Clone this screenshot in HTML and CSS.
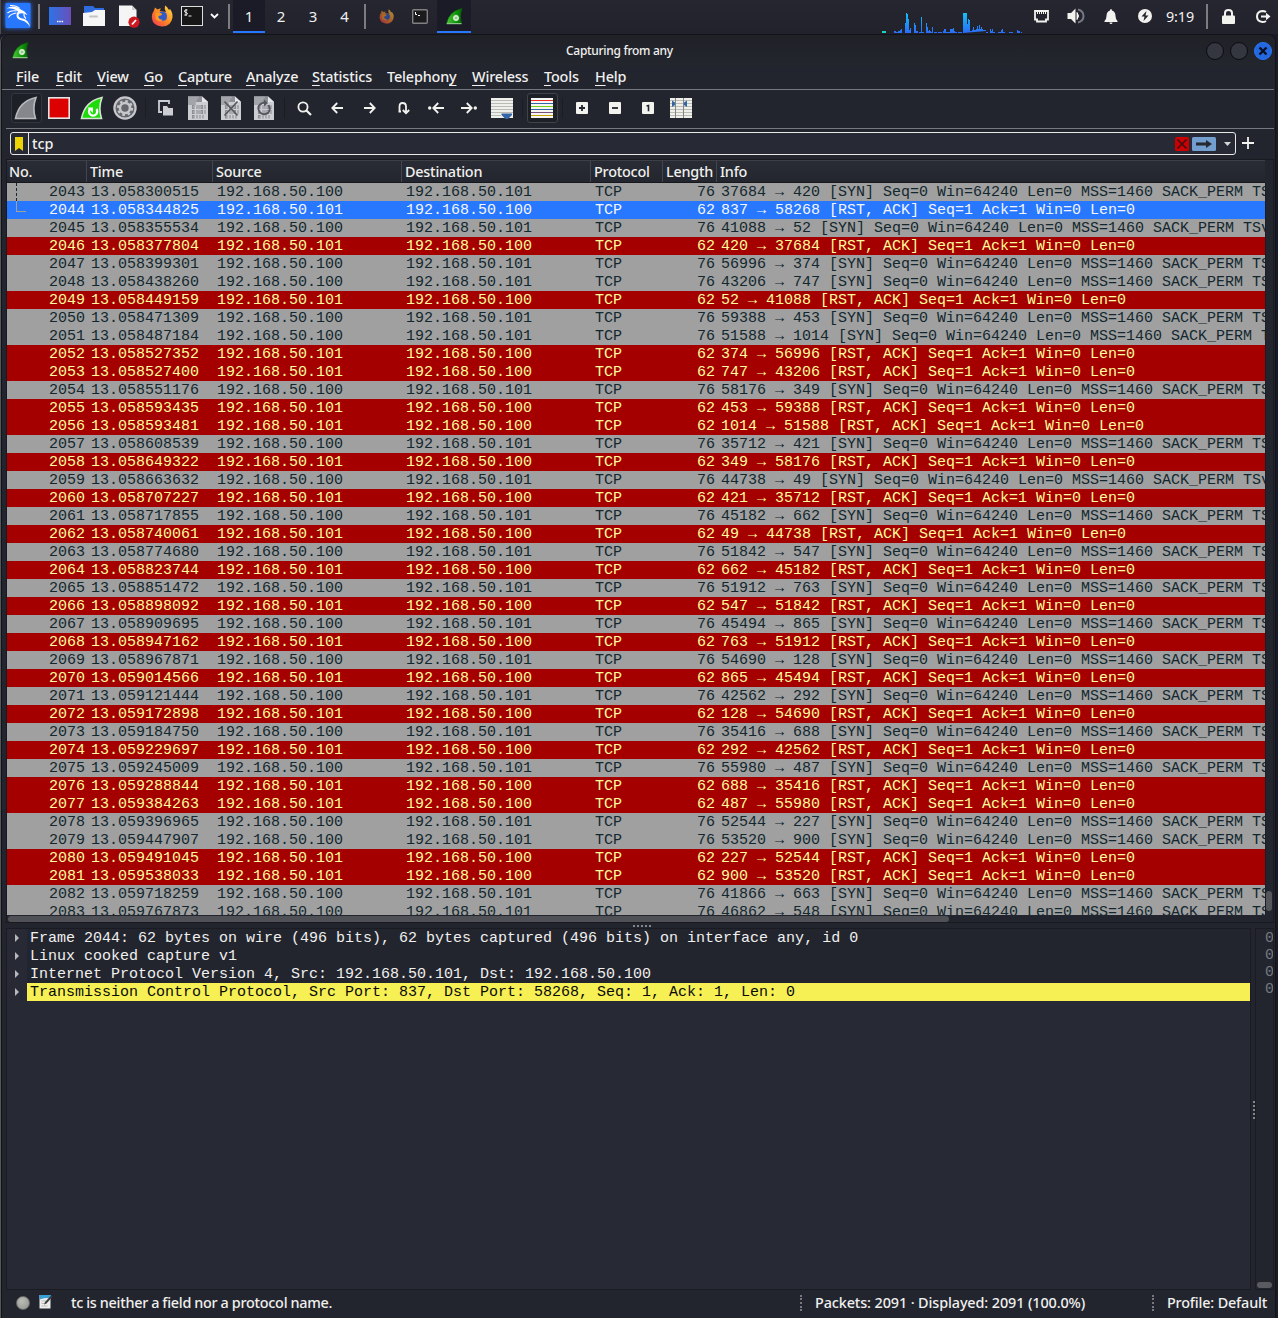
FILE: index.html
```html
<!DOCTYPE html>
<html lang="en">
<head>
<meta charset="utf-8">
<title>Capturing from any</title>
<link rel="stylesheet" href="styles.css">
</head>
<body>
<svg class="defs" width="0" height="0">
  <defs>
    <linearGradient id="fire" x1="0" y1="1" x2="1" y2="0"><stop offset="0" stop-color="#f0305c"/><stop offset=".5" stop-color="#ff8a22"/><stop offset="1" stop-color="#ffe14a"/></linearGradient>
    <linearGradient id="desk"><stop offset="0" stop-color="#2c74e8"/><stop offset="1" stop-color="#6a4fb8"/></linearGradient>
    <linearGradient id="green" x1="0" x2="1"><stop offset="0" stop-color="#4fc63a"/><stop offset=".6" stop-color="#12970c"/><stop offset="1" stop-color="#066a04"/></linearGradient>
    <linearGradient id="net" gradientUnits="userSpaceOnUse" x1="0" y1="0" x2="0" y2="21"><stop offset="0" stop-color="#12c4f4"/><stop offset="1" stop-color="#2a6cf8"/></linearGradient>
    <symbol id="firefox" viewBox="0 0 22 22"><path d="M3 5.500L4 2.500L6.500 4.500Q8 3.500 10 3.500L8.500 6L15 7Q13 4 14 .5Q16 1 18 5L19 4Q22 8 21.500 12.500Q20 21.500 11 21.500Q2 21 .8 13Q.3 9 3 5.500Z" fill="url(#fire)"/><path d="M8 8Q12 5 15.500 8.500Q17.500 15 12 16Q6.500 15.500 6.500 11Z" fill="#3358c8"/><path d="M4.500 8Q8 6.500 11.500 9Q10 11 7.500 11Q7 14.500 12 15Q8 18 4.500 14Z" fill="#ff9a20"/></symbol>
    <symbol id="shark" viewBox="0 0 17 17"><path d="M.5 15.500Q3 3.500 15.800 .5Q13.200 8 15.500 15.500Z" fill="url(#green)" stroke="#0a6a08" stroke-width=".6"/><path d="M.8 15.700H15.500" stroke="#a8dca0" stroke-width="1"/><circle cx="10" cy="10" r="2.900" fill="#d6eed0"/><circle cx="10" cy="10" r="1.300" fill="#4ba744"/><path d="M10 6.800V13.200M6.800 10H13.200" stroke="#d6eed0" stroke-width=".6"/></symbol>
    <symbol id="bits" viewBox="0 0 20 24"><path d="M0 .5H14L20 6V24H0Z" fill="#ccced3"/><path d="M0 .5H14L20 6H8Q8 2 12 .5H0Z" fill="#8d9096"/><path d="M0 .5H11Q7 4 8 9H0Z" fill="#a2a5aa"/><path d="M14 .5L20 6H14Z" fill="#e7e8ea"/><g fill="none" stroke="#8b8e94" stroke-width="1.100"><path d="M4.500 9.500h1.500v3h-1.500zM13 9.500h1.500v3h-1.500zM4.500 14.500h1.500v3h-1.500zM13 14.500h1.500v3h-1.500zM4.500 19.500h1.500v2.500h-1.500z"/><path d="M9 9v4M11 9v4M17 9v4M9 14v4M11 14v4M9 19v3.500M12 19v3.500M15 19v3.500M17 14v4"/></g></symbol>
  </defs>
</svg>

<header class="taskbar">
  <div class="cell w35"><svg class="kali" width="28" height="28" viewBox="0 0 28 28"><rect x="1.500" y="1" width="25" height="25" rx="1" fill="#2878ff"/><g fill="#fff"><path d="M2.500 6.500Q9 2.500 15 6.500L20.500 9.500L23.500 13L19.500 11.500Q14.500 10.500 14.500 13.500Q15 16 19 16.500Q24.500 17.500 26 25Q23 19.500 18 18.500Q12.500 17.500 12.500 13.500Q12.500 11 14 9.500Q9 5.500 2.500 6.500Z"/></g><path d="M6 3.500Q12 3 15.500 6.500M3.500 11Q7 8 12.500 9M4.500 15.500Q7 11.500 12.500 11M20 11.500Q19.500 14.500 22 16.500" fill="none" stroke="#fff" stroke-width="1.100"/></svg></div>
  <div class="cell w8"><i class="bar"></i></div>
  <div class="cell w34"><svg width="22" height="18" viewBox="0 0 22 18"><rect width="22" height="18" fill="url(#desk)"/><path d="M8 14.500h1.500M10.300 14.500h1.500M12.600 14.500h1.500" stroke="#fff" stroke-width="1.600"/></svg></div>
  <div class="cell w34"><svg width="22" height="20" viewBox="0 0 22 20"><path d="M1 0H10L12 2H21V8H1Z" fill="#2f6ce0"/><path d="M0 7L9 6L12 4H22V20H0Z" fill="#f6f6f6"/><path d="M7 10.500h7" stroke="#c4c4c4" stroke-width="2" stroke-linecap="round"/></svg></div>
  <div class="cell w34"><svg class="doc" width="21" height="23" viewBox="0 0 21 23"><path d="M0 .5H13L17.500 5V21H0Z" fill="#f5f5f5"/><path d="M13 .5L17.500 5H13Z" fill="#ccc"/><circle cx="15" cy="17.200" r="5.600" fill="#cf1720"/><path d="M13 19.500L17 15" stroke="#fff" stroke-width="1.800"/></svg></div>
  <div class="cell w34"><svg width="22" height="22"><use href="#firefox"/></svg></div>
  <div class="cell w27"><svg class="term" width="22" height="20" viewBox="0 0 22 20"><rect x=".5" y=".5" width="21" height="19" fill="#171717" stroke="#ddd"/><path d="M6.500 4Q3.500 3.500 3.500 5Q3.500 6.500 5 6.500Q6.500 7 6.500 8Q6.300 9.200 3.300 9M5 3v7M7.500 10h3" fill="none" stroke="#fff" stroke-width=".9"/></svg></div>
  <div class="cell w18"><svg class="term" width="9" height="6" viewBox="0 0 9 6"><path d="M1 1L4.500 4.500L8 1" fill="none" stroke="#fff" stroke-width="1.800"/></svg></div>
  <div class="cell w9"><i class="bar"></i></div>
  <div class="cell w32 active">1</div>
  <div class="cell w32">2</div>
  <div class="cell w32">3</div>
  <div class="cell w31">4</div>
  <div class="cell w10"><i class="bar"></i></div>
  <div class="cell w33"><svg class="faded" width="15" height="15"><use href="#firefox"/></svg></div>
  <div class="cell w34"><svg width="16" height="15" viewBox="0 0 16 15"><rect x=".7" y=".7" width="14.600" height="13.600" rx="1" fill="#1a1b1d" stroke="#808080" stroke-width="1.400"/><path d="M3.500 3v2.500H5M6 6.500h2" stroke="#fff" fill="none"/></svg></div>
  <div class="cell w34 active"><svg width="17" height="17"><use href="#shark"/></svg></div>
  <svg class="graph" width="142" height="22" viewBox="0 0 142 22"><path d="M0 19h4v2h-4z" fill="#1fd0bd"/><path fill="url(#net)" d="M12 19h2v1h2v-1h2v-1h1v-1h1v4h-8zM23 21v-10h1v-10h1v1h1v5h1v11h1v-2h1v5zM32 21v-10h1v2h1v6h2v2zM37 21v-1h2v-15h1v15h2v1zM44 21v-10h1v4h1v4h1v-1h1v1h1v1h1v-5h1v6zM52 20h3v1h-3zM56 20h4v1h-4zM61 21v-2h1v-2h2v3h4v-3h3v-1h1v3h1v1h2v1zM76 20h4v1h-4zM81 21v-20h4v11h1v-5h1v1h1v11h2v-1h1v-3h1v3h2v-1h1v-3h1v3h1v-4h1v4h1v-2h1v2h1v1h3v1zM104 20h2v1h-2zM108 21v-4h1v2h1v-2h1v3h2v1zM116 20h3v-2h1v-1h1v3h2v1h-7zM127 20h4v1h-4zM135 21v-3h1v1h2v2zM139 20h1v1h-1z"/></svg>
  <div class="cell w34"><svg width="15" height="13" viewBox="0 0 15 13"><path d="M1 1H14V9.500H12V11.500H3V9.500H1Z" fill="none" stroke="#f2f2ee" stroke-width="1.800"/><path d="M3.500 1v3M5.500 1v3M7.500 1v3M9.500 1v3M11.500 1v3" stroke="#f2f2ee"/></svg></div>
  <div class="cell w35"><svg width="18" height="16" viewBox="0 0 18 16"><path d="M.5 5H4L8.500 .5V15.500L4 11H.5Z" fill="#f2f2ee"/><path d="M10 4.500Q13 8 10 11.500Z" fill="#f2f2ee" stroke="#f2f2ee"/><path d="M11 1.500Q16.500 3 16.500 8Q16.500 13 11 14.500" fill="none" stroke="#777982" stroke-width="2"/></svg></div>
  <div class="cell w35"><svg width="14" height="15" viewBox="0 0 14 15"><path d="M7 0Q8 0 8 1.500Q11.500 2.500 11.500 7Q11.500 10 13.500 12V13H.5V12Q2.500 10 2.500 7Q2.500 2.500 6 1.500Q6 0 7 0ZM5.500 13.500H8.500Q8.500 15 7 15Q5.500 15 5.500 13.500" fill="#f2f2ee"/></svg></div>
  <div class="cell w33"><svg width="14" height="14" viewBox="0 0 14 14"><circle cx="7" cy="7" r="7" fill="#f2f2ee"/><path d="M8.500 2L3.500 7.500H6.500L5.500 12L10.500 6.500H7.500Z" fill="#23242f"/></svg></div>
  <div class="cell w38 clock">9:19</div>
  <div class="cell w15"><i class="bar"></i></div>
  <div class="cell w28"><svg width="13" height="15" viewBox="0 0 13 15"><path d="M3 7V4Q3 1 6.500 1Q10 1 10 4V7" fill="none" stroke="#f2f2ee" stroke-width="2"/><rect y="6.500" width="13" height="8.500" rx="1" fill="#f2f2ee"/></svg></div>
  <div class="cell w42"><svg width="15" height="13" viewBox="0 0 15 13"><path d="M10 2Q8.500 1 6.500 1Q1 1.500 1 6.500Q1 11.500 6.500 12Q8.500 12 10 11" fill="none" stroke="#f2f2ee" stroke-width="2"/><path d="M5 5.500H10V2.800L14.500 6.500L10 10.200V7.500H5Z" fill="#f2f2ee"/></svg></div>
</header>

<main class="window">
  <div class="titlebar">
    <svg width="17" height="17"><use href="#shark"/></svg>
    <h1>Capturing from any</h1>
    <div class="buttons"><b></b><b></b><b class="close"><svg width="10" height="10" viewBox="0 0 10 10"><path d="M1.500 1.500L8.500 8.500M8.500 1.500L1.500 8.500" stroke="#0b1020" stroke-width="2.400"/></svg></b></div>
  </div>
  <nav class="menu">
    <span><u>F</u>ile</span><span><u>E</u>dit</span><span><u>V</u>iew</span><span><u>G</u>o</span><span><u>C</u>apture</span><span><u>A</u>nalyze</span><span><u>S</u>tatistics</span><span>Telephon<u>y</u></span><span><u>W</u>ireless</span><span><u>T</u>ools</span><span><u>H</u>elp</span>
  </nav>
  <div class="toolbar">
    <div class="tool pressed dark"><svg width="24" height="24" viewBox="0 0 24 24"><path d="M1.500 22.500Q5 5 22 1.500Q18 12 21.500 22.500Z" fill="#85878d" stroke="#b8babf" stroke-width="1.600"/></svg></div>
    <div class="tool"><svg width="22" height="22" viewBox="0 0 22 22"><rect x=".8" y=".8" width="20.400" height="20.400" fill="#dd0000" stroke="#e4e4e4" stroke-width="1.600"/></svg></div>
    <div class="tool"><svg width="24" height="24" viewBox="0 0 24 24"><path d="M1.500 22.500Q5 5 22 1.500Q18 12 21.500 22.500Z" fill="#1edc0a" stroke="#d5e6d0" stroke-width="1.600"/><path d="M9.800 12.500Q7.800 17 11 19Q14 20.500 16.500 18Q18 15 16.500 13" fill="none" stroke="#fff" stroke-width="2.200"/><path d="M7.500 11.500H13V17Z" fill="#fff"/></svg></div>
    <div class="tool"><svg width="24" height="24" viewBox="0 0 24 24"><circle cx="12" cy="12" r="10.600" fill="#63666c" stroke="#c5c7ca" stroke-width="2.200"/><circle cx="12" cy="12" r="5" fill="none" stroke="#c5c7ca" stroke-width="2.600"/><circle cx="12" cy="12" r="7" fill="none" stroke="#c5c7ca" stroke-width="2.200" stroke-dasharray="2.700 2.800"/></svg></div>
    <i class="split"></i>
    <div class="tool"><svg width="15" height="16" viewBox="0 0 15 16"><path d="M4 12H1V1H11V4" fill="none" stroke="#ccced3" stroke-width="1.800"/><path d="M5 6H9L10.500 8H15V15.500H5Z" fill="#ccced3"/></svg></div>
    <div class="tool"><svg width="20" height="24"><use href="#bits"/></svg></div>
    <div class="tool"><svg width="20" height="24" viewBox="0 0 20 24"><use href="#bits"/><path d="M3.500 5.500L16.500 19.500M16.500 5.500L3.500 19.500" stroke="#55585e" stroke-width="1.700"/></svg></div>
    <div class="tool"><svg width="20" height="24" viewBox="0 0 20 24"><use href="#bits"/><path d="M14.500 9Q17 13 14.500 16.500Q10.500 20 6 16.500Q2.500 12 6 8.500Q8 6.500 11 6.800" fill="none" stroke="#55585e" stroke-width="1.800"/><path d="M10 3.500L14 7L10 10.500Z" fill="#55585e"/></svg></div>
    <i class="split"></i>
    <div class="tool"><svg width="15" height="15" viewBox="0 0 15 15"><circle cx="6" cy="6" r="4.600" fill="none" stroke="#f2f2ee" stroke-width="1.800"/><path d="M9.500 9.500L14 14" stroke="#f2f2ee" stroke-width="2.200"/></svg></div>
    <div class="tool"><svg width="12" height="12" viewBox="0 0 12 12"><path d="M12 6H1.500M6.200 1L1.300 6L6.200 11" fill="none" stroke="#f2f2ee" stroke-width="1.800"/></svg></div>
    <div class="tool"><svg width="12" height="12" viewBox="0 0 12 12"><path d="M0 6H10.500M5.800 1L10.700 6L5.800 11" fill="none" stroke="#f2f2ee" stroke-width="1.800"/></svg></div>
    <div class="tool"><svg width="13" height="14" viewBox="0 0 13 14"><path d="M1.500 10.500H4M2.500 10V5.500Q2.500 2 5.500 2Q9 2 9 5.500V11M5.800 9L9 12.200L12.200 9" fill="none" stroke="#f2f2ee" stroke-width="1.800"/></svg></div>
    <div class="tool"><svg width="16" height="12" viewBox="0 0 16 12"><circle cx="1.700" cy="6" r="1.700" fill="#f2f2ee"/><path d="M16 6H6M10.200 1L5.300 6L10.200 11" fill="none" stroke="#f2f2ee" stroke-width="1.800"/></svg></div>
    <div class="tool"><svg width="16" height="12" viewBox="0 0 16 12"><circle cx="14.300" cy="6" r="1.700" fill="#f2f2ee"/><path d="M0 6H10M5.800 1L10.700 6L5.800 11" fill="none" stroke="#f2f2ee" stroke-width="1.800"/></svg></div>
    <div class="tool"><svg width="22" height="22" viewBox="0 0 22 22"><path fill="#efefeb" d="M0 1h22v20H0z"/><path d="M0 3.500h22M0 6.500h22M0 9.500h22M0 12.500h22M0 15.500h22M0 18.500h10" stroke="#b9bbb4"/><path d="M10.500 16.500H21V18L17 22H14.500L10.500 18Z" fill="#3465a4"/></svg></div>
    <i class="split"></i>
    <div class="tool pressed"><svg width="22" height="22" viewBox="0 0 22 22"><path fill="#f5f5f2" d="M0 1h22v20H0z"/><path d="M0 3.500h22" stroke="#ef2929"/><path d="M0 6.500h22" stroke="#3465a4"/><path d="M0 9.500h22" stroke="#73d216"/><path d="M0 12.500h22" stroke="#3465a4"/><path d="M0 15.500h22" stroke="#75507b"/><path d="M0 18.500h22" stroke="#c4a000"/></svg></div>
    <i class="split"></i>
    <div class="tool"><svg width="12" height="12" viewBox="0 0 12 12"><rect width="12" height="12" rx="1" fill="#f2f2ee"/><path d="M6 3v6M3 6h6" stroke="#23252e" stroke-width="1.800"/></svg></div>
    <div class="tool"><svg width="12" height="12" viewBox="0 0 12 12"><rect width="12" height="12" rx="1" fill="#f2f2ee"/><path d="M3 6h6" stroke="#23252e" stroke-width="1.800"/></svg></div>
    <div class="tool"><svg width="12" height="12" viewBox="0 0 12 12"><rect width="12" height="12" rx="1" fill="#f2f2ee"/><path d="M4.500 4L6.500 3.500V9.300" fill="none" stroke="#23252e" stroke-width="1.600"/></svg></div>
    <div class="tool"><svg width="22" height="22" viewBox="0 0 22 22"><path fill="#efefeb" d="M0 1h22v20H0z"/><path d="M0 3.500h22M0 6.500h22M0 9.500h22M0 12.500h22M0 15.500h22M0 18.500h22" stroke="#b9bbb4"/><path d="M5.500 1v20M13.500 1v20" stroke="#85877f"/><path d="M2 3.500L5 5.500V8L2 10ZM17 3.500L14 5.500V8L17 10Z" fill="#3465a4"/></svg></div>
  </div>
  <div class="filter">
    <div class="field">
      <span class="mark"><svg width="8" height="14" viewBox="0 0 8 14"><path d="M0 0H8V14L4 11L0 14Z" fill="#edd400"/></svg></span>
      <span class="query">tcp</span>
      <svg width="14" height="14" viewBox="0 0 14 14"><rect width="14" height="14" rx="1.500" fill="#cc0000"/><path d="M2.500 2.500L11.500 11.500M11.500 2.500L2.500 11.500" stroke="#3a1015" stroke-width="1.500"/></svg>
      <svg class="apply" width="24" height="14" viewBox="0 0 24 14"><rect width="24" height="14" rx="1.500" fill="#729fcf"/><path d="M4 5.500H14V3L20 7L14 11V8.500H4Z" fill="#25292f"/></svg>
      <svg class="drop" width="7" height="4" viewBox="0 0 7 4"><path d="M0 0H7L3.500 4Z" fill="#d6d6d2"/></svg>
    </div>
    <svg class="plus" width="12" height="12" viewBox="0 0 12 12"><path d="M6 0v12M0 6h12" stroke="#f2f2ee" stroke-width="1.800"/></svg>
  </div>
  <section class="packets">
    <div class="head"><span>No.</span><span>Time</span><span>Source</span><span>Destination</span><span>Protocol</span><span>Length</span><span>Info</span></div>
    <div class="scroller">
      <div class="rows" id="rows"></div>
      <div class="vtrack"><i class="vthumb"></i></div>
    </div>
    <div class="htrack"><i class="hthumb"></i></div>
  </section>
  <div class="grip"></div>
  <section class="lower">
    <div class="detail">
      <p><svg class="tri" width="4" height="8" viewBox="0 0 4 8"><path d="M0 0L4 4L0 8Z"/></svg><span>Frame 2044: 62 bytes on wire (496 bits), 62 bytes captured (496 bits) on interface any, id 0</span></p>
      <p><svg class="tri" width="4" height="8" viewBox="0 0 4 8"><path d="M0 0L4 4L0 8Z"/></svg><span>Linux cooked capture v1</span></p>
      <p><svg class="tri" width="4" height="8" viewBox="0 0 4 8"><path d="M0 0L4 4L0 8Z"/></svg><span>Internet Protocol Version 4, Src: 192.168.50.101, Dst: 192.168.50.100</span></p>
      <p><svg class="tri" width="4" height="8" viewBox="0 0 4 8"><path d="M0 0L4 4L0 8Z"/></svg><span class="hit">Transmission Control Protocol, Src Port: 837, Dst Port: 58268, Seq: 1, Ack: 1, Len: 0</span></p>
    </div>
    <div class="vgrip"></div>
    <div class="hex"><p>0</p><p>0</p><p>0</p><p>0</p><i class="hexthumb"></i></div>
  </section>
  <footer class="status">
    <i class="led"></i>
    <svg class="note" width="14" height="15" viewBox="0 0 14 15"><path d="M.5 1H11.500V14.500H.5Z" fill="#eeeeec"/><path d="M.5 1H11.500V4.500Q6 3 .5 5.500Z" fill="#38a0d4"/><path d="M2.500 7h5M2.500 9.500h3M2.500 12h6" stroke="#babdb6"/><path d="M5 10.500L6 8L12 1.500L13.500 2.800L7.500 9.500Z" fill="#3c3f42"/></svg>
    <span class="msg">tc is neither a field nor a protocol name.</span>
    <i class="dots"></i>
    <span class="count">Packets: 2091 · Displayed: 2091 (100.0%)</span>
    <i class="dots"></i>
    <span class="profile">Profile: Default</span>
  </footer>
</main>
<script src="packets.js"></script>
</body>
</html>
```
FILE: styles.css
```css
* { box-sizing: border-box; }
body {
  margin: 0; width: 1278px; height: 1318px; overflow: hidden;
  background: #1a1b28; color: #f0f0ee;
  font: 500 14.4px "Noto Sans", sans-serif;
  display: flex; flex-direction: column;
}
svg { display: block; flex: none; }
i, b { display: block; flex: none; }
.defs { position: absolute; }

/* desktop panel */
.taskbar { height: 34px; flex: none; display: flex; background: linear-gradient(#262631, #22222d); border-left: 1px solid #4c4d50; margin-bottom: 1px; font-weight: 400; font-size: 15px; }
.taskbar .cell:first-child { margin-left: -1px; }
.cell { height: 33px; flex: none; display: flex; align-items: center; justify-content: center; padding-bottom: 1px; }
.active { background: #1a1b26; border-bottom: 2px solid #2777ff; padding: 1px 0 0; }
.bar { width: 2px; height: 25px; background: #7d7d80; }
.w8 { width: 8px; } .w9 { width: 9px; } .w10 { width: 10px; } .w15 { width: 15px; } .w18 { width: 18px; }
.w27 { width: 27px; } .w28 { width: 28px; } .w31 { width: 31px; } .w32 { width: 32px; } .w33 { width: 33px; }
.w34 { width: 34px; } .w35 { width: 35px; } .w38 { width: 38px; }
.w42 { width: 42px; }
.kali { filter: drop-shadow(0 0 2px #2878ff); }
.doc { margin-left: 2px; }
.term { margin-right: 2px; }
.faded { opacity: .6; }
.graph { margin: 12px 0 0 411px; }
.clock { font-size: 14.4px; letter-spacing: -.1px; }

/* capture window */
.window { flex: 1; margin-left: 2px; width: 1273px; display: flex; flex-direction: column; background: #23252e; border-radius: 7px 7px 0 0; box-shadow: 0 0 0 1px #121319, -2px 0 0 #55565a; }
.titlebar { height: 31px; flex: none; display: grid; grid-template-columns: 1fr auto 1fr; align-items: center; padding: 0 3px 0 10px; background: linear-gradient(#1f2127, #24262e); border-radius: 7px 7px 0 0; }
h1 { margin: 0 45px 0 0; font: 500 12px "Noto Sans", sans-serif; letter-spacing: -.3px; position: relative; left: 0; }
.buttons { display: flex; gap: 6px; justify-content: flex-end; }
.titlebar { grid-template-columns: 554px 1fr auto; }
.buttons b { width: 18px; height: 18px; border-radius: 50%; background: #343640; border: 1px solid #0b0c10; display: flex; align-items: center; justify-content: center; }
.buttons .close { background: #2468e0; border-color: #2777ff; }
.menu { height: 24px; flex: none; display: grid; grid-template-columns: 40px 41px 47px 34px 68px 66px 75px 85px 72px 51px 60px; padding-left: 14px; line-height: 22px; letter-spacing: -.15px; border-bottom: 1px solid #777980; margin: 0 1px 0 0; }
.menu u { text-underline-offset: 3px; text-decoration-thickness: 1px; text-decoration-skip-ink: none; }
.toolbar { height: 39px; flex: none; display: flex; align-items: center; padding: 0 0 2px 3.500px; margin: 0 1px 0 4px; border-bottom: 1px solid #777980; }
.tool { width: 33px; height: 30px; display: flex; align-items: center; justify-content: center; }
.tool.pressed { width: 31px; margin: 0 1px; background: #1e2027; border: 1px solid #41434a; border-radius: 3px; }
.tool.dark { border-color: #34363d; }
.split { width: 7px; height: 20px; background: linear-gradient(#1b1d24, #1b1d24) 3px 0 / 1px 100% no-repeat; }
.filter { height: 30px; flex: none; padding: 3px 0 0 8px; display: flex; align-items: flex-start; }
.field { width: 1226px; height: 23px; border: 1px solid #e8e8e4; border-radius: 3px; background: #272935; display: flex; align-items: center; }
.mark { width: 18px; height: 21px; border-right: 1px solid #e8e8e4; display: flex; align-items: center; justify-content: center; padding-right: 1px; }
.query { flex: 1; padding: 0 0 1px 3px; letter-spacing: -.1px; }
.apply { margin-left: 3px; }
.drop { margin: 0 4px 0 8px; }
.plus { margin: 5px 0 0 6px; }

/* packet list */
.packets { flex: none; height: 764px; margin: 0 1px 0 4px; border: 1px solid #191a20; display: flex; flex-direction: column; }
.head, .row { display: grid; grid-template-columns: 80px 126px 189px 189px 72px 54px 1fr; }
.head { width: 1258px; height: 23px; flex: none; background: linear-gradient(#292c34, #23262e); border-top: 1px solid #3c3f46; border-bottom: 1px solid #17181e; line-height: 21px; letter-spacing: -.22px; }
.head span { border-right: 1px solid #43464d; padding-left: 3px; }
.head span:first-child { padding-left: 2px; }
.head span:last-child { border: 0; }
.scroller { display: flex; height: 732px; flex: none; }
.rows { width: 1258px; overflow: hidden; }
.row, .detail, .hex { font: 400 15px/18px "Liberation Mono", monospace; }
.row { height: 18px; background: #a0a0a0; color: #12272e; white-space: pre; line-height: 19px; }
.row span { height: 18px; padding-left: 4px; overflow: hidden; position: relative; }
.row span:nth-child(1), .row span:nth-child(6) { text-align: right; padding: 0 2px 0 0; }
.rst { background: #a40000; color: #fffc9c; }
.selected { background: #2777ff; color: #f4f6ff; }
.first span:first-child::before { content: ""; position: absolute; left: 9px; top: 0; height: 18px; border-left: 1px dashed #12272e; }
.selected span:first-child::before { content: ""; position: absolute; left: 9px; top: 0; width: 9px; height: 10px; border: solid #a0a0a0; border-width: 0 0 1px 1px; }
.vtrack { width: 8px; border-left: 1px solid #1c1d24; }
.vthumb { width: 6px; height: 20px; margin: 708px 0 0; border-radius: 3px; background: #55565b; }
.htrack { height: 8px; padding: 1px; }
.hthumb { width: 941px; height: 6px; border-radius: 3px; background: #505156; }
.grip { height: 4px; flex: none; width: 18px; margin: 0 0 1px 631px; border-bottom: 2px dotted #85868a; }

/* packet details and bytes */
.lower { height: 362px; flex: none; display: flex; margin: 0 1px 0 4px; }
.detail { width: 1245px; border: 1px solid #1b1c23; background: #272935; }
p { margin: 0; white-space: pre; }
.detail p { height: 18px; display: flex; align-items: center; padding-left: 8px; line-height: 20px; }
.tri { fill: #b7b8ba; margin-right: 8px; }
.detail span { flex: 1; height: 18px; padding-left: 3px; background: #23252e; }
.detail .hit { background: #f6f055; color: #0a0a0a; }
.vgrip { width: 4px; height: 18px; margin: 173px -2px 0 2px; border-left: 2px dotted #85868a; }
.hex { width: 19px; overflow: hidden; position: relative; border: 1px solid #1b1c23; line-height: 17px; color: #77797e; padding: 1px 0 0 9px; }
.hexthumb { position: absolute; left: 1px; bottom: 1px; width: 15px; height: 6px; border-radius: 3px; background: #5a5b60; }

/* status bar */
.status { height: 28px; flex: none; display: flex; align-items: center; padding: 0 0 3px 14px; }
.led { width: 14px; height: 14px; border-radius: 50%; background: radial-gradient(circle at 40% 35%, #babdb6, #90938d); border: 1px solid #686a68; }
.note { margin: -2px 18px 0 9px; }
.msg { width: 729px; letter-spacing: -.25px; word-spacing: -.35px; }
.dots { width: 2px; height: 16px; border-left: 2px dotted #77797e; }
.count { margin-left: 13px; width: 337px; letter-spacing: -.11px; }
.profile { margin-left: 13px; white-space: nowrap; letter-spacing: -.17px; }
```
FILE: packets.js
```js
// number, fraction of second 13, kind (S = SYN, R = RST/ACK), source port, destination port
const packets = `2043 058300515 S 37684 420
2044 058344825 R 837 58268
2045 058355534 S 41088 52
2046 058377804 R 420 37684
2047 058399301 S 56996 374
2048 058438260 S 43206 747
2049 058449159 R 52 41088
2050 058471309 S 59388 453
2051 058487184 S 51588 1014
2052 058527352 R 374 56996
2053 058527400 R 747 43206
2054 058551176 S 58176 349
2055 058593435 R 453 59388
2056 058593481 R 1014 51588
2057 058608539 S 35712 421
2058 058649322 R 349 58176
2059 058663632 S 44738 49
2060 058707227 R 421 35712
2061 058717855 S 45182 662
2062 058740061 R 49 44738
2063 058774680 S 51842 547
2064 058823744 R 662 45182
2065 058851472 S 51912 763
2066 058898092 R 547 51842
2067 058909695 S 45494 865
2068 058947162 R 763 51912
2069 058967871 S 54690 128
2070 059014566 R 865 45494
2071 059121444 S 42562 292
2072 059172898 R 128 54690
2073 059184750 S 35416 688
2074 059229697 R 292 42562
2075 059245009 S 55980 487
2076 059288844 R 688 35416
2077 059384263 R 487 55980
2078 059396965 S 52544 227
2079 059447907 S 53520 900
2080 059491045 R 227 52544
2081 059538033 R 900 53520
2082 059718259 S 41866 663
2083 059767873 S 46862 548`;

const rows = document.getElementById("rows");
packets.split("\n").forEach((line, i) => {
  const [no, frac, kind, from, to] = line.split(" ");
  const syn = kind === "S";
  const host = "192.168.50.";
  const row = document.createElement("div");
  row.className = "row" + (syn ? "" : " rst") + (i === 0 ? " first" : "") + (no === "2044" ? " selected" : "");
  const cells = [
    no, "13." + frac,
    host + (syn ? 100 : 101), host + (syn ? 101 : 100),
    "TCP", syn ? 76 : 62,
    `${from} → ${to} ` + (syn ? "[SYN] Seq=0 Win=64240 Len=0 MSS=1460 SACK_PERM TSval" : "[RST, ACK] Seq=1 Ack=1 Win=0 Len=0")
  ];
  for (const text of cells) {
    const cell = document.createElement("span");
    cell.textContent = text;
    row.append(cell);
  }
  rows.append(row);
});
```
